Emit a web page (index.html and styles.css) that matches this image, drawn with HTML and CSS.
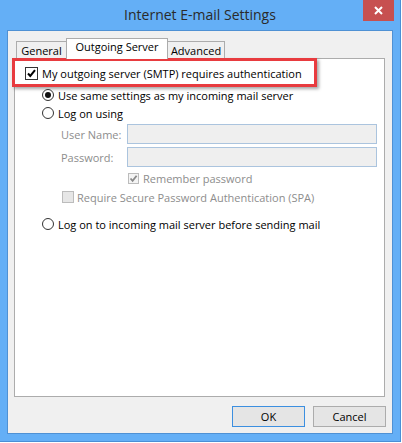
FILE: index.html
```html
<!DOCTYPE html>
<html lang="en">
<head>
    <meta charset="UTF-8">
    <title>Internet E-mail Settings</title>
    <link rel="stylesheet" href="styles.css">
</head>
<body>

<div class="window">
    <div class="titlebar">
        <span></span>
        <div class="title">Internet E-mail Settings</div>
        <div class="close">
            <svg width="9" height="9" viewBox="0 0 9 9"><path d="M1 1 L8 8 M8 1 L1 8" stroke="#fff" stroke-width="2"/></svg>
        </div>
    </div>

    <div class="client">
        <div class="tabs">
            <div class="tab tab-general">General</div>
            <div class="tab tab-outgoing active">Outgoing Server</div>
            <div class="tab tab-advanced">Advanced</div>
        </div>

        <div class="panel">
            <!-- red annotation round the first option -->
            <div class="highlight"></div>

            <div class="row row-main">
                <span class="check">
                    <svg width="11" height="11" viewBox="0 0 11 11"><path d="M2 5.5 L4.3 8 L9 2.2" fill="none" stroke="#000" stroke-width="2"/></svg>
                </span>
                <span>My outgoing server (SMTP) requires authentication</span>
            </div>

            <div class="row row-radio row-same">
                <span class="radio on"></span>
                <span>Use same settings as my incoming mail server</span>
            </div>

            <div class="row row-radio row-logon">
                <span class="radio"></span>
                <span>Log on using</span>
            </div>

            <div class="row row-field row-user">
                <span class="label">User Name:</span>
                <span class="field"></span>
            </div>

            <div class="row row-field row-pass">
                <span class="label">Password:</span>
                <span class="field"></span>
            </div>

            <div class="row row-remember disabled">
                <span class="check off">
                    <svg width="9" height="9" viewBox="0 0 9 9"><path d="M1.5 4.5 L3.6 6.8 L7.6 1.8" fill="none" stroke="#8a8a8a" stroke-width="1.8"/></svg>
                </span>
                <span>Remember password</span>
            </div>

            <div class="row row-spa disabled">
                <span class="check off empty"></span>
                <span>Require Secure Password Authentication (SPA)</span>
            </div>

            <div class="row row-radio row-before">
                <span class="radio"></span>
                <span>Log on to incoming mail server before sending mail</span>
            </div>
        </div>

        <div class="buttons">
            <div class="btn btn-ok">OK</div>
            <div class="btn">Cancel</div>
        </div>
    </div>
</div>

</body>
</html>
```

FILE: styles.css
```css
body {
    margin: 0;
    font-family: "Open Sans", Arial, sans-serif;
    font-size: 11px;
    color: #000;
}
.window {
    width: 401px;
    height: 442px;
    background: #64aff6;
    border-right: 1px solid #4a8fd6;
    border-bottom: 1px solid #4a8fd6;
    padding: 0 7px;
    box-sizing: border-box;
}
.titlebar {
    height: 30px;
    display: grid;
    grid-template-columns: 1fr auto 1fr;
    margin: 0 -7px;
}
.title {
    font-size: 14px;
    color: #2a2a2a;
    line-height: 30px;
}
.close {
    justify-self: end;
    width: 31px;
    height: 21px;
    margin-right: 6px;
    background: #c75050;
    display: flex;
    align-items: center;
    justify-content: center;
}
.client {
    height: 404px;
    background: #f0f0f0;
    border: 1px solid #4f91d4;
    box-sizing: border-box;
}
.tabs {
    display: flex;
    align-items: flex-end;
    height: 28px;
    padding-left: 8px;
    margin-bottom: -1px;
    position: relative;
    z-index: 1;
}
.tab {
    height: 17px;
    margin-bottom: 1px;
    border: 1px solid #acacac;
    border-bottom: none;
    box-sizing: border-box;
    line-height: 17px;
    text-align: center;
    background: #f0f0f0;
}
.tab + .tab {
    margin-left: -1px;
}
.tab-general { width: 51px; }
.tab-outgoing { width: 102px; }
.tab-advanced { width: 58px; }
.tab.active {
    height: 21px;
    margin-bottom: 0;
    background: #fff;
    line-height: 15px;
    position: relative;
}
.panel {
    position: relative;
    height: 339px;
    margin: 0 7px 9px 6px;
    background: #fff;
    border: 1px solid #acacac;
    box-sizing: border-box;
    padding-top: 5px;
}
.highlight {
    position: absolute;
    left: -3px;
    top: -1px;
    width: 305px;
    height: 29px;
    border: 3px solid #e83b3f;
    box-sizing: border-box;
    box-shadow: 2px 2px 3px rgba(0, 0, 0, 0.35);
}
.row {
    display: flex;
    align-items: center;
    height: 18px;
    position: relative;
}
.row-main { padding-left: 10px; }
.row-radio { padding-left: 27px; }
.row-same { margin-top: 4px; }
.row-before { margin-top: 9px; }
.row-field {
    height: 20px;
    padding-left: 46px;
    margin-top: 2px;
}
.row-pass { margin-top: 3px; }
.row-remember { padding-left: 113px; margin-top: 2px; }
.row-spa { padding-left: 47px; margin-top: 1px; }
.disabled, .label { color: #8d8d8d; }
.label { width: 66px; }
.field {
    width: 250px;
    height: 20px;
    background: #efefef;
    border: 1px solid #abc4de;
    box-sizing: border-box;
}
.check {
    width: 13px;
    height: 13px;
    border: 1px solid #333;
    background: #fff;
    box-sizing: border-box;
    margin-right: 4px;
    display: flex;
    align-items: center;
    justify-content: center;
}
.check.off {
    width: 11px;
    height: 11px;
    border-color: #bcbcbc;
    background: #f4f4f4;
}
.check.empty {
    width: 12px;
    height: 12px;
    background: #e6e6e6;
    margin-right: 3px;
}
.radio {
    width: 12px;
    height: 12px;
    border: 1px solid #333;
    border-radius: 50%;
    background: #fff;
    box-sizing: border-box;
    margin-right: 4px;
    display: flex;
    align-items: center;
    justify-content: center;
}
.radio.on::after {
    content: "";
    width: 6px;
    height: 6px;
    border-radius: 50%;
    background: #111;
}
.buttons {
    display: flex;
    justify-content: flex-end;
    gap: 8px;
    padding-right: 6px;
}
.btn {
    width: 73px;
    height: 21px;
    line-height: 19px;
    text-align: center;
    background: #e5e5e5;
    border: 1px solid #acacac;
    box-sizing: border-box;
}
.btn-ok {
    border-color: #3c8fe0;
}
```
